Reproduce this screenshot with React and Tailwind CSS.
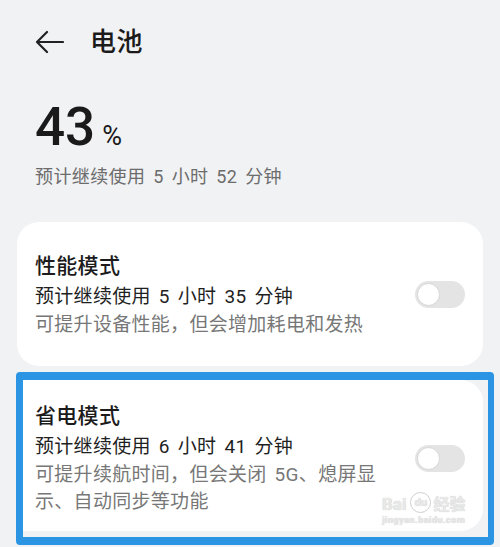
import React from "react";

const Toggle = () => (
  <div className="w-[50px] h-[27px] rounded-full bg-[#e4e4e4] p-[2px] shrink-0">
    <div className="w-[23px] h-[23px] rounded-full bg-white border border-[#d6d6d6]" />
  </div>
);

const App = () => {
  return (
    <div className="relative w-[500px] min-h-[547px] overflow-hidden bg-[#f1f2f4] font-['Roboto','Noto_Sans_CJK_SC',sans-serif] text-[#1b1b1b]">
      <div className="flex items-center h-[84px] pl-[35px]">
        <svg width="29" height="24" viewBox="0 0 29 24" fill="none">
          <path d="M28 12H2M12 2L2 12L12 22" stroke="#222" strokeWidth="2.2" strokeLinecap="round" strokeLinejoin="round" />
        </svg>
        <span className="ml-[26px] text-[26px] font-medium leading-none tracking-[0.5px]">电池</span>
      </div>

      <div className="pl-[35px] mt-[17px]">
        <div className="flex items-baseline">
          <span className="text-[53px] leading-[52px] font-medium text-[#1a1a1a]">43</span>
          <span className="ml-[7px] text-[27px] leading-none text-[#1a1a1a]">%</span>
        </div>
        <p className="mt-[10px] text-[18px] leading-[28px] text-[#6c6c6c] tracking-[0.4px] [word-spacing:3px]">预计继续使用 5 小时 52 分钟</p>
      </div>

      <div className="mx-[17px] mt-[31px] bg-white rounded-[22px] flex items-center pl-[18px] pr-[18px] pt-[29px] pb-[28px]">
        <div className="flex-1">
          <div className="text-[21px] leading-[30px] font-medium tracking-[0.3px]">性能模式</div>
          <div className="mt-[2px] text-[19px] leading-[28px] text-[#1f1f1f] tracking-[0.3px] [word-spacing:3px]">预计继续使用 5 小时 35 分钟</div>
          <div className="text-[19px] leading-[27px] text-[#777] tracking-[0.3px]">可提升设备性能，但会增加耗电和发热</div>
        </div>
        <Toggle />
      </div>

      <div className="ml-[16px] mt-[6px] w-[478px] border-[#2b95e3] border-l-[7px] border-r-[6px] border-t-[8px] border-b-[8px] rounded-[4px] bg-[#f1f2f4] pr-[5px] pb-[6px]">
        <div className="bg-white rounded-r-[22px] flex items-center pl-[12px] pr-[18px] pt-[21px] pb-[16px]">
          <div className="w-[348px]">
            <div className="text-[21px] leading-[30px] font-medium tracking-[0.3px]">省电模式</div>
            <div className="mt-[2px] text-[19px] leading-[28px] text-[#1f1f1f] tracking-[0.3px] [word-spacing:3px]">预计继续使用 6 小时 41 分钟</div>
            <div className="text-[19px] leading-[27px] text-[#777] tracking-[0.3px] [word-spacing:3px]">可提升续航时间，但会关闭 5G、熄屏显示、自动同步等功能</div>
          </div>
          <div className="ml-auto">
            <Toggle />
          </div>
        </div>
      </div>

      <div className="absolute left-[382px] top-[492px] flex flex-col items-center text-[#e9e9e9] [text-shadow:0_0_1px_#bdbdbd]">
        <div className="flex items-end">
          <span className="text-[17px] font-bold leading-none">Bai</span>
          <span className="ml-[4px] w-[21px] h-[21px] rounded-full border border-[#cfcfcf] text-[11px] font-bold leading-[19px] text-center">du</span>
          <span className="ml-[2px] text-[16px] font-bold leading-none">经验</span>
        </div>
        <span className="mt-[3px] text-[9px] font-bold leading-none tracking-[0.5px]">jingyan.baidu.com</span>
      </div>
    </div>
  );
};

export default App;
